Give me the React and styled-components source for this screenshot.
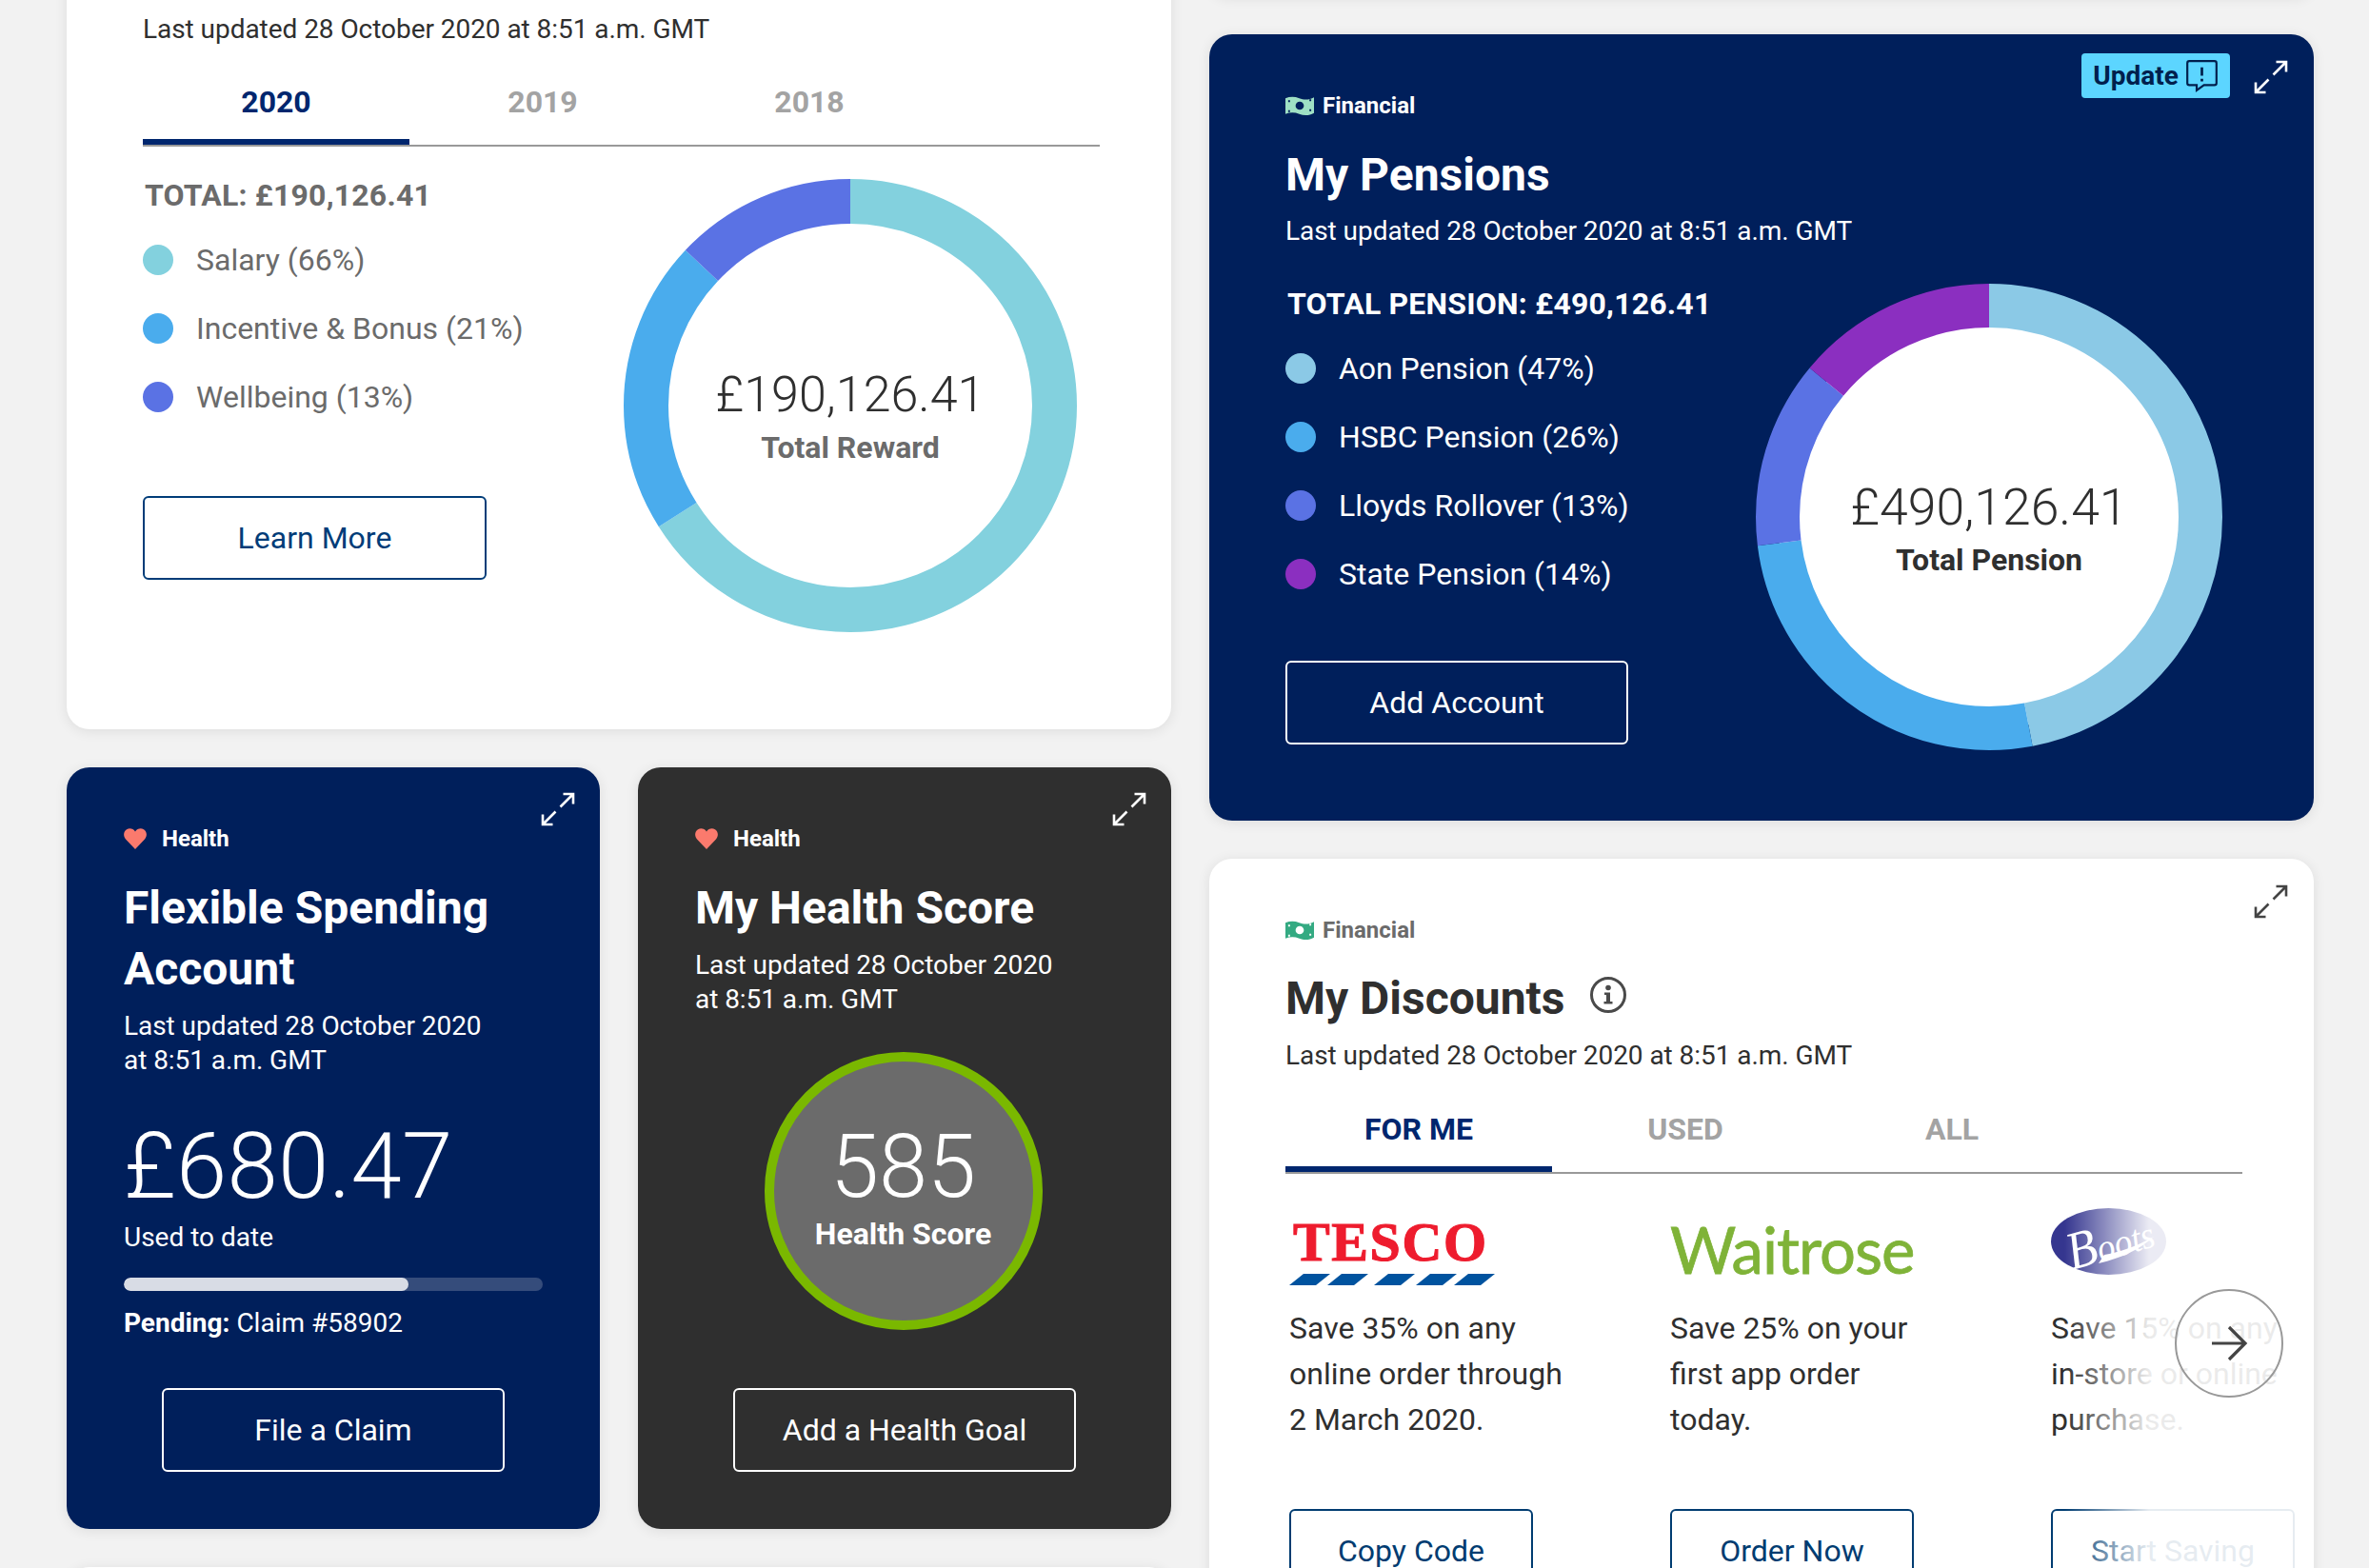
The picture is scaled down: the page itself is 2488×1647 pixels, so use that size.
import React from 'react';
import styled, { createGlobalStyle } from 'styled-components';

const Global = createGlobalStyle`
  html, body { margin: 0; padding: 0; background: #f2f2f2; overflow: hidden; }
  * { box-sizing: border-box; }
  body { font-family: Roboto, "Liberation Sans", sans-serif; color: #2f2f2f; }
`;

const NAVY = '#001f5b';
const DARK = '#2f2f2f';

const Page = styled.div`
  height: 1647px; overflow: hidden; display: grid;
  grid-template-columns: 1160px 1160px; column-gap: 40px; padding-left: 70px; background: #f2f2f2;
`;
const Column = styled.div`
  display: flex; flex-direction: column; gap: 40px; margin-top: -44px; min-width: 0;
`;
const Row = styled.div`display: grid; grid-template-columns: 560px 560px; gap: 40px;`;
const Card = styled.section`
  position: relative; flex: none; background: ${p => p.$bg || '#fff'}; color: ${p => p.$fg || DARK};
  border-radius: 24px; box-shadow: 0 2px 14px rgba(0,0,0,.09);
  padding: ${p => p.$pad || '59px 80px 0'};
  height: ${p => p.$h}px; display: flex; flex-direction: column; overflow: hidden;
`;
const Tag = styled.div`
  display: flex; align-items: center; gap: ${p => p.$gap || 9}px; height: 32px; font-size: 24px; font-weight: 700;
  color: ${p => p.$c || '#fff'};
`;
const Title = styled.h2`
  margin: ${p => p.$mt ?? 25}px 0 0; font-size: 48px; line-height: 64px; font-weight: 700; display: flex; align-items: center;
`;
const Updated = styled.p`
  margin: ${p => p.$mt ?? 10}px 0 0; font-size: 28px; line-height: 36px; font-weight: 400; letter-spacing: -.05px;
`;
const Tabs = styled.div`
  display: flex; margin-top: ${p => p.$mt ?? 40}px; border-bottom: 2px solid #999; width: 1005px; flex: none;
`;
const Tab = styled.div`
  width: 280px; height: 64px; padding-top: 1px; text-align: center; font-size: 32px; line-height: 36px; font-weight: 700;
  color: ${p => p.$on ? '#00266e' : '#a3a3a3'};
  border-bottom: 6px solid ${p => p.$on ? '#00266e' : 'transparent'};
`;
const Split = styled.div`display: flex; margin-top: ${p => p.$mt}px;`;
const Side = styled.div`width: ${p => p.$w}px; flex: none;`;
const Total = styled.div`
  font-size: 32px; line-height: 36px; font-weight: 700; color: ${p => p.$c}; padding-left: 2px; letter-spacing: .2px;
`;
const Legend = styled.ul`list-style: none; margin: 14px 0 0; padding: 0;`;
const LegendRow = styled.li`
  display: flex; align-items: center; gap: 24px; height: 72px; font-size: 32px; color: ${p => p.$c};
`;
const Dot = styled.span`width: 32px; height: 32px; border-radius: 50%; background: ${p => p.$c}; flex: none;`;
const Btn = styled.div`
  width: ${p => p.$w || 360}px; height: 88px; flex: none; display: flex; align-items: center; justify-content: center;
  border: 2px solid ${p => p.$c}; border-radius: 6px; color: ${p => p.$c}; font-size: 32px;
  margin-top: ${p => p.$mt || 0};
  align-self: ${p => p.$center ? 'center' : 'auto'};
  margin-bottom: ${p => p.$center ? '60px' : '0'};
`;
const DonutWrap = styled.div`
  position: relative; width: ${p => p.$d}px; height: ${p => p.$d}px; flex: none; margin-top: ${p => p.$mt || 0}px;
`;
const DonutText = styled.div`
  position: absolute; inset: 0; display: flex; flex-direction: column; align-items: center; justify-content: center;
  padding-top: ${p => p.$pt}px;
`;
const DonutAmount = styled.div`font-size: ${p => p.$s}px; line-height: 66px; font-weight: 300; color: #2f2f2f;`;
const DonutLabel = styled.div`font-size: 32px; line-height: 40px; font-weight: 700; color: ${p => p.$c}; margin-top: 2px;`;
const Expand = styled.svg`position: absolute; top: ${p => p.$t}px; right: ${p => p.$r}px; width: 36px; height: 36px;`;
const UpdateBadge = styled.div`
  position: absolute; top: 20px; right: 88px; width: 156px; height: 47px; border-radius: 4px; background: #5cd5ff;
  color: #001f4d; font-size: 28px; font-weight: 700; display: flex; align-items: center; justify-content: center; gap: 7px;
`;
const Amount = styled.div`font-size: 96px; line-height: 112px; font-weight: 300; margin-top: 37px; letter-spacing: .2px;`;
const Used = styled.div`font-size: 28px; line-height: 36px; margin-top: 1px;`;
const Bar = styled.div`height: 14px; border-radius: 7px; background: #354c7b; margin-top: 24px; overflow: hidden;`;
const BarFill = styled.div`height: 100%; border-radius: 7px; background: #d8dce5;`;
const Pending = styled.div`font-size: 28px; line-height: 36px; margin-top: 16px; b { font-weight: 700; }`;
const Score = styled.div`
  width: 292px; height: 292px; border-radius: 50%; border: 10px solid #7ab800; background: #6b6b6b; align-self: center; margin: 37px 3px 0 0;
  display: flex; flex-direction: column; align-items: center; color: #fff; flex: none;
`;
const ScoreNum = styled.div`font-size: 92px; line-height: 100px; font-weight: 300; margin-top: 61px;`;
const ScoreLabel = styled.div`font-size: 32px; line-height: 40px; font-weight: 700;`;
const Carousel = styled.div`
  position: relative; margin: 0 -80px 0 0; padding-left: 4px; display: flex; height: 500px; flex: none;
`;
const Slide = styled.div`width: 400px; flex: none; display: flex; flex-direction: column;`;
const LogoBox = styled.div`height: 138px; flex: none; position: relative;`;
const TescoWord = styled.div`
  font-family: "Liberation Serif", serif; font-weight: 700; font-size: 58px; line-height: 50px; color: #ee1c2e;
  letter-spacing: 1.6px; padding: 47px 0 0 4px; height: 105px; -webkit-text-stroke: 1.1px #ee1c2e;
`;
const TescoStripes = styled.svg`display: block; width: 217px; height: 12px;`;
const Waitrose = styled.div`
  font-family: Lato, "Open Sans", sans-serif; font-size: 67px; line-height: 70px; color: #7fb338; padding-top: 44px;
  letter-spacing: -1px; font-weight: 400; -webkit-text-stroke: .8px #7fb338;
`;
const Boots = styled.div`
  position: relative; width: 121px; height: 70px; margin-top: 36px; border-radius: 50%; background: #35368f; color: #fff;
  display: flex; align-items: center; justify-content: center;
  font-family: "Liberation Serif", serif; font-style: italic; font-size: 40px;
  span { display: block; transform: rotate(-16deg) scaleX(.92); margin-top: -3px; margin-left: 2px; }
  span::first-letter { font-size: 56px; }
  svg { position: absolute; inset: 0; }
`;
const Offer = styled.div`font-size: 32px; line-height: 48px; height: 214px; flex: none; color: #2f2f2f; white-space: pre-line;`;
const OfferBtn = styled(Btn)`width: 256px; font-size: 32px;`;
const Fade = styled.div`
  position: absolute; top: 0; right: 0; bottom: 0; width: 262px; pointer-events: none;
  background: linear-gradient(90deg, rgba(255,255,255,0), rgba(255,255,255,.9) 34%, rgba(255,255,255,.9));
`;
const NextBtn = styled.div`
  position: absolute; left: 934px; top: 121px; width: 114px; height: 114px; border-radius: 50%; border: 2px solid #999;
  display: flex; align-items: center; justify-content: center;
`;
const InfoIcon = styled.svg`width: 38px; height: 38px; margin-left: 27px; margin-top: -8px;`;

const Arrows = ({ c = '#fff', t, r }) => (
  <Expand $t={t} $r={r} viewBox="0 0 36 36" fill="none" stroke={c} strokeWidth="2.6">
    <path d="M20.500 15.500 34 2M23.500 2H34V12.500M15.500 20.500 2 34M2 23.500V34H12.500" />
  </Expand>
);
const Money = ({ c, d }) => (
  <svg width="30" height="22" viewBox="0 0 31 22">
    <path d="M0 3c5-2 10-2 15 0s11 2 16-1v17c-5 3-11 3-16 1s-10-2-15 0z" fill={c} />
    <circle cx="15.5" cy="11" r="4.5" fill={d} />
    <path d="M3 5h2v2H3zM26 4h2v2h-2zM3 16h2v2H3zM26 15h2v2h-2z" fill={d} />
  </svg>
);
const Heart = () => (
  <svg width="24" height="22" viewBox="0 0 24 22"><path d="M12 22 2 11.500C-1 8-.2 3 3 1.200 6.500-.6 10 .6 12 3.500c2-2.900 5.500-4.100 9-2.300 3.200 1.800 4 6.800 1 10.300z" fill="#fb7a6d" /></svg>
);

function Donut({ size, stroke, parts }) {
  const r = (size - stroke) / 2;
  const c = 2 * Math.PI * r;
  let acc = 0;
  return (
    <svg width={size} height={size} viewBox={`0 0 ${size} ${size}`} style={{ transform: 'rotate(-90deg)', display: 'block' }}>
      <circle cx={size / 2} cy={size / 2} r={r} fill="#fff" />
      {parts.map(([col, pct]) => {
        const el = <circle key={col} cx={size / 2} cy={size / 2} r={r} fill="none" stroke={col} strokeWidth={stroke}
          strokeDasharray={`${(pct / 100) * c} ${c}`} strokeDashoffset={-(acc / 100) * c} />;
        acc += pct;
        return el;
      })}
    </svg>
  );
}

const List = ({ items, c }) => (
  <Legend>{items.map(([col, t]) => <LegendRow key={t} $c={c}><Dot $c={col} />{t}</LegendRow>)}</Legend>
);

const stripeStarts = [0, 40, 89, 133, 173];

export default function App() {
  return (
    <Page>
      <Global />
      <Column>
        <Card $h={810} $pad="57px 80px 0">
          <Updated $mt={0}>Last updated 28 October 2020 at 8:51 a.m. GMT</Updated>
          <Tabs $mt={39}><Tab $on>2020</Tab><Tab>2019</Tab><Tab>2018</Tab></Tabs>
          <Split $mt={33}>
            <Side $w={505}>
              <Total $c="#6b6b6b">TOTAL: £190,126.41</Total>
              <List c="#6b6b6b" items={[['#83d1de', 'Salary (66%)'], ['#4aaced', 'Incentive & Bonus (21%)'], ['#5a72e4', 'Wellbeing (13%)']]} />
              <Btn $c="#003c78" $w={361} $mt="68px">Learn More</Btn>
            </Side>
            <DonutWrap $d={476} $mt={1}>
              <Donut size={476} stroke={47} parts={[['#83d1de', 66], ['#4aaced', 21], ['#5a72e4', 13]]} />
              <DonutText $pt={20}>
                <DonutAmount $s={52}>£190,126.41</DonutAmount>
                <DonutLabel $c="#6b6b6b">Total Reward</DonutLabel>
              </DonutText>
            </DonutWrap>
          </Split>
        </Card>
        <Row>
          <Card $h={800} $bg={NAVY} $fg="#fff" $pad="59px 60px 0">
            <Arrows t={26} r={26} />
            <Tag $gap={16}><Heart />Health</Tag>
            <Title>Flexible Spending<br />Account</Title>
            <Updated>Last updated 28 October 2020<br />at 8:51 a.m. GMT</Updated>
            <Amount>£680.47</Amount>
            <Used>Used to date</Used>
            <Bar><BarFill style={{ width: '68%' }} /></Bar>
            <Pending><b>Pending:</b> Claim #58902</Pending>
            <Btn $c="#fff" $center $mt="auto">File a Claim</Btn>
          </Card>
          <Card $h={800} $bg={DARK} $fg="#fff" $pad="59px 60px 0">
            <Arrows t={26} r={26} />
            <Tag $gap={16}><Heart />Health</Tag>
            <Title>My Health Score</Title>
            <Updated>Last updated 28 October 2020<br />at 8:51 a.m. GMT</Updated>
            <Score><ScoreNum>585</ScoreNum><ScoreLabel>Health Score</ScoreLabel></Score>
            <Btn $c="#fff" $center $mt="auto">Add a Health Goal</Btn>
          </Card>
        </Row>
        <Card $h={120} />
      </Column>
      <Column>
        <Card $h={40} $pad="0" />
        <Card $h={826} $bg={NAVY} $fg="#fff">
          <UpdateBadge>Update
            <svg width="35" height="35" viewBox="0 0 32 32" fill="none" stroke="#001f4d" strokeWidth="2">
              <path d="M4 2h24a2 2 0 0 1 2 2v19a2 2 0 0 1-2 2H18l-7 5v-5H4a2 2 0 0 1-2-2V4a2 2 0 0 1 2-2z" />
              <path d="M16 8v8M16 19v2.500" strokeWidth="2.500" />
            </svg>
          </UpdateBadge>
          <Arrows t={27} r={27} />
          <Tag><Money c="#9fe0c4" d="#001f5b" />Financial</Tag>
          <Title>My Pensions</Title>
          <Updated $mt={9}>Last updated 28 October 2020 at 8:51 a.m. GMT</Updated>
          <Split $mt={40}>
            <Side $w={494}>
              <Total $c="#fff">TOTAL PENSION: £490,126.41</Total>
              <List c="#fff" items={[['#8bc9e6', 'Aon Pension (47%)'], ['#4aaced', 'HSBC Pension (26%)'], ['#5a72e4', 'Lloyds Rollover (13%)'], ['#8b2fc0', 'State Pension (14%)']]} />
              <Btn $c="#fff" $mt="55px">Add Account</Btn>
            </Side>
            <DonutWrap $d={490} $mt={-3}>
              <Donut size={490} stroke={46} parts={[['#8bc9e6', 47], ['#4aaced', 26], ['#5a72e4', 13], ['#8b2fc0', 14]]} />
              <DonutText $pt={22}>
                <DonutAmount $s={53.5}>£490,126.41</DonutAmount>
                <DonutLabel $c="#2f2f2f">Total Pension</DonutLabel>
              </DonutText>
            </DonutWrap>
          </Split>
        </Card>
        <Card $h={900}>
          <Arrows c="#444" t={27} r={27} />
          <Tag $c="#6b6b6b"><Money c="#34aa82" d="#fff" />Financial</Tag>
          <Title $mt={24}>My Discounts
            <InfoIcon viewBox="0 0 38 38" fill="none">
              <circle cx="19" cy="19" r="17.500" stroke="#4a4a4a" strokeWidth="3" />
              <circle cx="19" cy="11.500" r="2.800" fill="#4a4a4a" />
              <path d="M15 16.500h6V26h2.500v2.500h-9V26H17v-7h-2z" fill="#4a4a4a" />
            </InfoIcon>
          </Title>
          <Updated>Last updated 28 October 2020 at 8:51 a.m. GMT</Updated>
          <Tabs><Tab $on>FOR ME</Tab><Tab>USED</Tab><Tab>ALL</Tab></Tabs>
          <Carousel>
            <Slide>
              <LogoBox>
                <TescoWord>TESCO</TescoWord>
                <TescoStripes viewBox="0 0 217 12">
                  {stripeStarts.map(x => <polygon key={x} points={`${x},12 ${x + 15},0 ${x + 43},0 ${x + 28},12`} fill="#00539f" />)}
                </TescoStripes>
              </LogoBox>
              <Offer>{'Save 35% on any\nonline order through\n2 March 2020.'}</Offer>
              <OfferBtn $c="#003c71">Copy Code</OfferBtn>
            </Slide>
            <Slide>
              <LogoBox><Waitrose>Waitrose</Waitrose></LogoBox>
              <Offer>{'Save 25% on your\nfirst app order\ntoday.'}</Offer>
              <OfferBtn $c="#003c71">Order Now</OfferBtn>
            </Slide>
            <Slide>
              <LogoBox>
                <Boots>
                  <svg viewBox="0 0 121 70" width="121" height="70"><path d="M50 58C75 52 92 44 108 30 90 40 70 47 56 49Z" fill="#fff" /></svg>
                  <span>Boots</span>
                </Boots>
              </LogoBox>
              <Offer>{'Save 15% on any\nin-store or online\npurchase.'}</Offer>
              <OfferBtn $c="#003c71">Start Saving</OfferBtn>
            </Slide>
            <Fade />
            <NextBtn>
              <svg width="40" height="38" viewBox="0 0 40 38" fill="none" stroke="#444" strokeWidth="3.200">
                <path d="M2 19h35M20 2l17 17-17 17" />
              </svg>
            </NextBtn>
          </Carousel>
        </Card>
      </Column>
    </Page>
  );
}
